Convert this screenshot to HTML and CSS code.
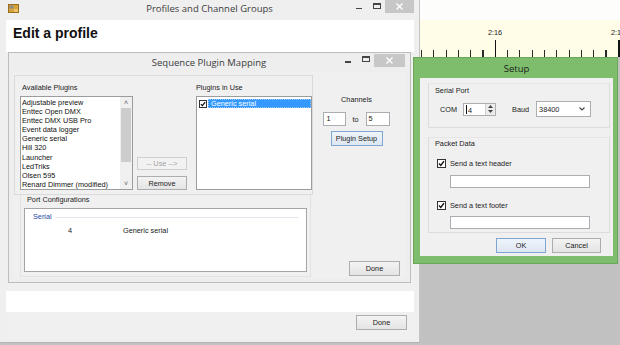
FILE: index.html
```html
<!DOCTYPE html>
<html lang="en">
<head>
    <meta charset="UTF-8">
    <title>Profiles and Channel Groups</title>
    <link rel="stylesheet" href="styles.css">
</head>
<body>
<div class="desk">

    <!-- timeline of the sequence editor, behind the dialogs -->
    <div class="timeline">
        <div class="tl-blank"></div>
        <div class="tl-ruler">
            <span class="tl-label tl-at-a">2:16</span>
            <span class="tl-label tl-at-b">2:17</span>
            <span class="tl-major tl-at-a"></span>
            <span class="tl-major tl-at-b"></span>
        </div>
    </div>

    <!-- Profiles and Channel Groups -->
    <div class="win win-main">
        <div class="titlebar">
            <svg class="app-icon" width="11" height="9" viewBox="0 0 11 9">
                <rect x="0.5" y="0.5" width="10" height="8" fill="#d6a23a" stroke="#9a6d1c"/>
                <rect x="1.5" y="1.5" width="4" height="3" fill="#8c8c8c"/>
                <rect x="6" y="5" width="4" height="3" fill="#e9c46a"/>
            </svg>
            <div class="title">Profiles and Channel Groups</div>
            <div class="caption">
                <span class="cap-min"><i></i></span>
                <span class="cap-max"><i></i></span>
                <span class="cap-close">
                    <svg width="7" height="7" viewBox="0 0 7 7"><path d="M0.5 0.5L6.5 6.5M6.5 0.5L0.5 6.5" stroke="#fff" stroke-width="1.3"/></svg>
                </span>
            </div>
        </div>
        <div class="main-client">
            <div class="main-header"><h1>Edit a profile</h1></div>
            <div class="main-body"></div>
            <div class="main-strip"></div>
            <div class="main-footer"><button class="btn btn-done">Done</button></div>
        </div>
    </div>

    <!-- Sequence Plugin Mapping -->
    <div class="win win-map">
        <div class="titlebar titlebar-map">
            <div></div>
            <div class="title">Sequence Plugin Mapping</div>
            <div class="caption">
                <span class="cap-min"><i></i></span>
                <span class="cap-max"><i></i></span>
                <span class="cap-close">
                    <svg width="7" height="7" viewBox="0 0 7 7"><path d="M0.5 0.5L6.5 6.5M6.5 0.5L0.5 6.5" stroke="#fff" stroke-width="1.3"/></svg>
                </span>
            </div>
        </div>
        <div class="map-client">
            <div class="plugin-panel">
                <div class="plug-col plug-avail">
                    <div class="lbl">Available Plugins</div>
                    <div class="listbox">
                        <ul class="items">
                            <li>Adjustable preview</li>
                            <li>Enttec Open DMX</li>
                            <li>Enttec DMX USB Pro</li>
                            <li>Event data logger</li>
                            <li>Generic serial</li>
                            <li>Hill 320</li>
                            <li>Launcher</li>
                            <li>LedTriks</li>
                            <li>Olsen 595</li>
                            <li>Renard Dimmer (modified)</li>
                            <li>Sandy 595</li>
                        </ul>
                        <div class="vscroll">
                            <span class="arrow">&#708;</span>
                            <span class="thumb"></span>
                            <span class="track"></span>
                            <span class="arrow">&#709;</span>
                        </div>
                    </div>
                </div>
                <div class="move-btns">
                    <button class="btn btn-use" disabled>-- Use --&gt;</button>
                    <button class="btn btn-remove">Remove</button>
                </div>
                <div class="plug-col plug-used">
                    <div class="lbl">Plugins in Use</div>
                    <div class="listbox">
                        <ul class="items">
                            <li class="checked-row">
                                <span class="chk chk-small">
                                    <svg width="6" height="6" viewBox="0 0 7 7"><path d="M1 3.6L2.8 5.4L6 1.2" fill="none" stroke="#111" stroke-width="1.5"/></svg>
                                </span>
                                <span class="sel">Generic serial</span>
                            </li>
                        </ul>
                    </div>
                </div>
            </div>

            <div class="port-panel">
                <div class="lbl">Port Configurations</div>
                <div class="listview">
                    <div class="lv-group"><span>Serial</span><i></i></div>
                    <div class="lv-row"><span class="lv-port">4</span><span>Generic serial</span></div>
                </div>
            </div>

            <div class="channel-col">
                <div class="lbl">Channels</div>
                <div class="range-row">
                    <span class="textbox tb-from">1</span>
                    <span class="to">to</span>
                    <span class="textbox tb-to">5</span>
                </div>
                <button class="btn btn-focus btn-setup">Plugin Setup</button>
                <button class="btn btn-map-done">Done</button>
            </div>
        </div>
    </div>

    <!-- Setup of the serial plugin -->
    <div class="win win-setup">
        <div class="setup-title">Setup</div>
        <div class="setup-client">
            <div class="group group-serial">
                <div class="lbl">Serial Port</div>
                <div class="port-row">
                    <span class="com-lbl">COM</span>
                    <span class="updown">
                        <span class="updown-val">4</span>
                        <span class="spin">
                            <svg width="5" height="3" viewBox="0 0 5 3"><path d="M0 3L2.5 0L5 3Z" fill="#444"/></svg>
                            <svg width="5" height="3" viewBox="0 0 5 3"><path d="M0 0L2.5 3L5 0Z" fill="#444"/></svg>
                        </span>
                    </span>
                    <span class="baud-lbl">Baud</span>
                    <span class="combo">
                        <span>38400</span>
                        <svg width="6" height="4" viewBox="0 0 6 4"><path d="M0.5 0.5L3 3L5.5 0.5" fill="none" stroke="#444" stroke-width="1.1"/></svg>
                    </span>
                </div>
            </div>

            <div class="group group-packet">
                <div class="lbl">Packet Data</div>
                <label class="check-row check-header">
                    <span class="chk">
                        <svg width="7" height="7" viewBox="0 0 7 7"><path d="M1 3.6L2.8 5.4L6 1.2" fill="none" stroke="#111" stroke-width="1.4"/></svg>
                    </span>
                    Send a text header
                </label>
                <span class="textbox tb-wide tb-header"></span>
                <label class="check-row check-footer">
                    <span class="chk">
                        <svg width="7" height="7" viewBox="0 0 7 7"><path d="M1 3.6L2.8 5.4L6 1.2" fill="none" stroke="#111" stroke-width="1.4"/></svg>
                    </span>
                    Send a text footer
                </label>
                <span class="textbox tb-wide tb-footer"></span>
            </div>

            <div class="dialog-btns">
                <button class="btn btn-focus btn-ok">OK</button>
                <button class="btn btn-cancel">Cancel</button>
            </div>
        </div>
    </div>

</div>
</body>
</html>
```

FILE: styles.css
```css
* { box-sizing: border-box; margin: 0; padding: 0; }
body { width: 620px; height: 345px; overflow: hidden; background: #c1c1c1;
       font-family: 'Liberation Sans', Arial, sans-serif; font-size: 7.3px; color: #1b1b1b; }
ul { list-style: none; }
.desk { position: relative; width: 620px; height: 345px; }

/* timeline */
.timeline { position: absolute; left: 420px; top: 0; width: 200px; }
.tl-blank { height: 20px; background: #fdfdfb; }
.tl-ruler { position: relative; height: 37px; background-color: #fffde8;
            background-image: repeating-linear-gradient(90deg, #2a2a2a 0 1px, transparent 1px 12.3px);
            background-size: 100% 7px; background-position: 1px 100%; background-repeat: no-repeat; }
.tl-label { position: absolute; top: 9px; transform: translateX(-50%); line-height: 8px; color: #222; }
.tl-major { position: absolute; bottom: 0; width: 1.5px; height: 17px; background: #111; }
.tl-label.tl-at-a { left: 75px; }
.tl-label.tl-at-b { left: 198px; }
.tl-major.tl-at-a { left: 74.5px; }
.tl-major.tl-at-b { left: 198px; }

/* windows on the desktop */
.win { position: absolute; display: flex; flex-direction: column; }
.win-main { left: 0; top: 0; width: 420px; height: 343px; background: #efefef; border-right: 1px solid #c4c4c4; border-bottom: 1px solid #b4b4b4; }
.win-map { left: 8px; top: 52px; width: 403px; height: 231px; background: #eeeeee; border: 1px solid #bdbdbd; padding: 0 5px 4px 4px; }
.win-setup { left: 413px; top: 57px; width: 205px; height: 207px; background: #7dbd6c; border: 1px solid #6aa75a; padding: 0 4px 7px 6px; }

.titlebar { display: grid; grid-template-columns: 1fr auto 1fr; height: 20px; }
.titlebar .title { font-family: 'Open Sans', sans-serif; font-size: 9.5px; color: #3c3c3c; line-height: 17px; white-space: nowrap; }
.titlebar-map { height: 19px; }
.titlebar-map .title { line-height: 19px; }
.app-icon { margin: 4px 0 0 8px; }
.caption { display: flex; justify-content: flex-end; align-items: flex-start; padding-right: 5px; }
.cap-min, .cap-max { width: 18px; height: 13px; display: flex; align-items: center; justify-content: center; }
.cap-max { width: 17px; }
.cap-min i { width: 6px; height: 1.5px; background: #444; margin-top: 4px; }
.cap-max i { width: 8px; height: 6px; border: 1px solid #444; border-top-width: 2px; margin-top: -1px; }
.cap-close { width: 29px; height: 13px; background: #c7c7c7; display: flex; align-items: center; justify-content: center; }
.titlebar-map .caption { padding-right: 0; }
.titlebar-map .cap-close { width: 31px; margin-top: 1px; }
.titlebar-map .cap-min i { margin-top: 5px; }

/* main window client */
.main-client { flex: 1; display: flex; flex-direction: column; margin: 0 5px 2px 6px; }
.main-header { height: 32px; background: #fff; }
.main-header h1 { font-size: 14px; font-weight: bold; line-height: 18px; padding: 3.5px 0 0 7px; color: #111; }
.main-body { flex: 1; background: #f0f0f0; }
.main-strip { height: 21px; background: #fff; }
.main-footer { height: 28px; background: #f0f0f0; display: flex; justify-content: flex-end; padding: 3px 7px 0 0; }

/* buttons */
.btn { font-family: inherit; font-size: 7.3px; color: #1b1b1b; height: 15px; border: 1px solid #adadad;
       background: linear-gradient(#f3f3f3, #e4e4e4); cursor: default; }
.btn:disabled { color: #a3a3a3; border-color: #cfcfcf; background: #f2f2f2; }
.btn-focus { border-color: #7fa6d3; background: linear-gradient(#eef4fa, #dde7f2); }
.btn-done { width: 51px; }

/* sequence plugin mapping */
.map-client { flex: 1; display: grid; grid-template-columns: 300px 1fr; grid-template-rows: 123px 1fr; background: #f0f0f0; }
.lbl { line-height: 8px; white-space: nowrap; }
.plugin-panel { margin: 3px 0 0 1px; width: 299px; height: 120px; border: 1px solid #dadada;
                display: flex; align-items: flex-end; padding: 0 0 4px 5px; }
.plug-col { display: flex; flex-direction: column; }
.plug-col .lbl { padding-left: 2px; margin-bottom: 4px; }
.plug-avail { width: 113px; }
.plug-used { width: 116px; margin-left: 9px; }
.plug-used .lbl { padding-left: 0; }
.listbox { height: 94px; background: #fff; border: 1px solid #9c9c9c; display: flex; overflow: hidden; }
.items { flex: 1; padding-top: 1px; overflow: hidden; }
.items li { line-height: 9.1px; padding-left: 1px; white-space: nowrap; color: #111; }
.vscroll { width: 12px; background: #f0f0f0; display: flex; flex-direction: column; }
.vscroll .arrow { height: 11px; line-height: 11px; text-align: center; font-size: 7px; color: #606060; }
.vscroll .thumb { height: 54px; margin: 0 1px; background: #cdcdcd; }
.vscroll .track { flex: 1; }
.move-btns { width: 50px; margin-left: 4px; display: flex; flex-direction: column; gap: 6px; }
.btn-use { height: 13px; }
.btn-remove { height: 14px; }
.checked-row { display: flex; align-items: center; margin-top: 1px; }
.chk { width: 9px; height: 9px; border: 1px solid #333; background: #fff; display: flex; align-items: center; justify-content: center; flex: none; }
.chk-small { width: 8px; height: 8px; margin: 0 1px 0 1px; }
.sel { flex: 1; background: #3399ff; color: #fff; line-height: 9px; padding-left: 3px; outline: 1px dotted #9ccaff; outline-offset: -1px; }

.port-panel { grid-row: 2; grid-column: 1; margin: 0 0 1px 7px; width: 291px; border: 1px solid #e2e2e2; border-top: none; padding: 1px 3px 4px 3px; display: flex; flex-direction: column; }
.port-panel .lbl { padding-left: 3px; }
.listview { margin-top: 4px; height: 64px; background: #fff; border: 1px solid #a4a4a4; }
.lv-group { display: flex; align-items: center; padding: 4px 8px 0 8px; line-height: 8px; color: #2a4aa8; }
.lv-group i { flex: 1; height: 1px; background: #dfe4ea; margin-left: 4px; }
.lv-row { display: grid; grid-template-columns: 98px auto; margin-top: 6px; line-height: 8px; }
.lv-port { padding-left: 43px; }

.channel-col { grid-row: 1 / 3; grid-column: 2; display: flex; flex-direction: column; align-items: center; padding: 24px 5px 2px 0; }
.range-row { display: flex; align-items: center; margin-top: 8px; }
.textbox { display: block; height: 14px; background: #fff; border: 1px solid #abadb3; line-height: 12px; padding-left: 2px; }
.tb-from { width: 23px; }
.tb-to { width: 24px; }
.to { margin: 0 7px 0 6px; }
.btn-setup { width: 52px; margin-top: 5px; }
.btn-map-done { width: 51px; margin-top: auto; align-self: flex-end; }

/* setup dialog */
.setup-title { height: 20px; padding-top: 1px; line-height: 19px; text-align: center; font-family: 'Open Sans', sans-serif; font-size: 9.5px; color: #1e1e1e; }
.setup-client { flex: 1; background: #f0f0f0; padding: 5px 3px 0 8px; display: flex; flex-direction: column; }
.group { width: 182px; border: 1px solid #dcdcdc; border-top-color: #e6e6e6; }
.group .lbl { padding-left: 6px; }
.group-serial { height: 45px; padding-top: 3px; }
.port-row { display: flex; align-items: center; margin-top: 6px; padding-left: 11px; height: 16px; }
.updown { width: 33px; height: 13px; margin-left: 6px; background: #fff; border: 1px solid #abadb3; display: flex; }
.updown-val { flex: 1; line-height: 11px; border-left: 1px solid #111; margin: 1px 0 1px 2px; padding-left: 1px; }
.spin { width: 10px; background: #ececec; border-left: 1px solid #d0d0d0; display: flex; flex-direction: column; align-items: center; justify-content: space-around; padding: 1px 0; }
.baud-lbl { margin-left: 16px; }
.combo { width: 55px; height: 16px; margin-left: 7px; background: #fff; border: 1px solid #abadb3; display: flex; align-items: center; justify-content: space-between; padding: 0 5px 0 2px; }
.group-packet { height: 96px; margin-top: 9px; padding-top: 2px; display: flex; flex-direction: column; }
.check-row { display: flex; align-items: center; gap: 4px; padding-left: 8px; line-height: 9px; }
.check-header { margin-top: 11px; }
.check-footer { margin-top: 13px; }
.tb-wide { width: 140px; height: 13px; margin-left: 21px; }
.tb-header { margin-top: 7px; }
.tb-footer { margin-top: 6px; }
.dialog-btns { display: flex; justify-content: flex-end; gap: 6px; margin-top: 5px; padding-right: 9px; }
.btn-ok { width: 50px; }
.btn-cancel { width: 49px; }
```
